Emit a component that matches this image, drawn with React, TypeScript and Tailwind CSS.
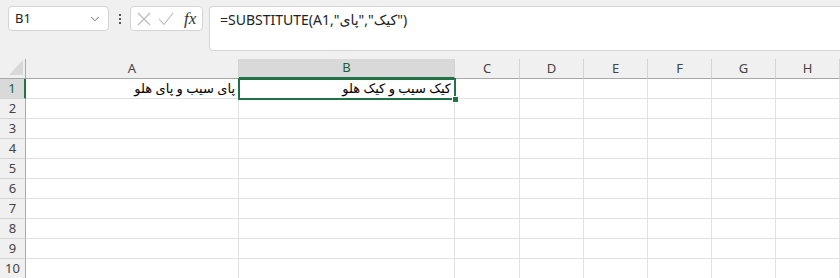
import { ChevronDown } from "lucide-react";

const columns = [
  { label: "A", width: "w-[213px]" },
  { label: "B", width: "w-[216px]" },
  { label: "C", width: "w-[65px]" },
  { label: "D", width: "w-[64px]" },
  { label: "E", width: "w-[64px]" },
  { label: "F", width: "w-[64px]" },
  { label: "G", width: "w-[64px]" },
  { label: "H", width: "w-[64px]" },
  { label: "", width: "w-[40px]" },
];

const cells: Record<string, string> = {
  A1: "پای سیب و پای هلو",
  B1: "کیک سیب و کیک هلو",
};

const rows = [1, 2, 3, 4, 5, 6, 7, 8, 9, 10];

function FormulaBar() {
  return (
    <div className="flex h-[59px] items-start bg-[#f0f0f0] pt-[6px]">
      <div className="ml-[8px] flex h-[25px] w-[101px] items-center justify-between rounded-[4px] border border-[#d4d4d4] bg-white pl-[6px] pr-[6px] text-[13px] text-[#222]">
        <span>B1</span>
        <ChevronDown size={14} strokeWidth={1.5} className="text-[#555]" />
      </div>
      <div className="flex h-[25px] w-[21px] flex-col items-center justify-center gap-[2px]">
        <span className="h-[2px] w-[2px] bg-[#555]" />
        <span className="h-[2px] w-[2px] bg-[#555]" />
        <span className="h-[2px] w-[2px] bg-[#555]" />
      </div>
      <div className="flex h-[25px] w-[73px] items-center rounded-[4px] border border-[#d4d4d4] bg-white pl-[6px]">
        <svg width="14" height="14" viewBox="0 0 14 14" fill="none" stroke="#b8b8b8" strokeWidth="1.1">
          <path d="M1 1 L13 13 M13 1 L1 13" />
        </svg>
        <svg className="ml-[7px]" width="16" height="14" viewBox="0 0 16 14" fill="none" stroke="#b8b8b8" strokeWidth="1.1">
          <path d="M1 7 L6 12.5 L15 1" />
        </svg>
        <span className="ml-[10px] font-['Liberation_Serif'] text-[17px] italic leading-none text-[#333]">
          fx
        </span>
      </div>
      <div className="ml-[6px] flex h-[45px] flex-1 items-start rounded-l-[4px] border border-r-0 border-[#d4d4d4] bg-white pl-[10px] pt-[2px] text-[14px] text-[#222]">
        <span>
          =SUBSTITUTE(A1,"<bdi>پای</bdi>","<bdi>کیک</bdi>")
        </span>
      </div>
    </div>
  );
}

function Sheet() {
  return (
    <div className="flex flex-col">
      <div className="flex h-[20px] bg-[#f0f0f0]">
        <div className="relative w-[26px] shrink-0 border-r border-b border-[#a8a8a8]">
          <svg className="absolute left-[9px] top-[1px]" width="14" height="15" viewBox="0 0 14 15">
            <polygon points="14,0 14,15 0,15" fill="#d8d8d8" />
          </svg>
        </div>
        {columns.map((col) => (
          <div
            key={col.label}
            className={`${col.width} flex shrink-0 items-center justify-center border-r border-b text-[13px] ${
              col.label === "B"
                ? "border-b-2 border-r-[#d4d4d4] border-b-[#217346] bg-[#d9d9d9] text-[#1e5e3a]"
                : "border-r-[#d4d4d4] border-b-[#a8a8a8] text-[#444]"
            }`}
          >
            {col.label}
          </div>
        ))}
      </div>
      {rows.map((r) => (
        <div key={r} className="flex h-[20px]">
          <div
            className={`flex w-[26px] shrink-0 items-center justify-center border-b border-r border-b-[#d4d4d4] text-[13px] ${
              r === 1
                ? "border-r-2 border-r-[#217346] bg-[#d9d9d9] text-[#1e5e3a]"
                : "border-r-[#a8a8a8] bg-[#f0f0f0] text-[#444]"
            }`}
          >
            {r}
          </div>
          {columns.map((col) => {
            const id = `${col.label}${r}`;
            return (
              <div
                key={col.label}
                className={`${col.width} relative flex shrink-0 items-center justify-end border-r border-b border-[#e1e1e1] pr-[3px] text-[13px] text-black ${
                  id === "B1" ? "z-10" : ""
                }`}
              >
                {cells[id] && <span dir="rtl">{cells[id]}</span>}
                {id === "B1" && (
                  <div className="absolute -left-[1px] -top-[1px] h-[22px] w-[218px] border-2 border-[#217346]">
                    <div className="absolute -bottom-[5px] -right-[5px] h-[7px] w-[7px] border border-white bg-[#217346]" />
                  </div>
                )}
              </div>
            );
          })}
        </div>
      ))}
    </div>
  );
}

export default function App() {
  return (
    <div className="h-[278px] w-[840px] overflow-hidden bg-white font-['Noto_Sans','DejaVu_Sans',sans-serif]">
      <FormulaBar />
      <Sheet />
    </div>
  );
}
